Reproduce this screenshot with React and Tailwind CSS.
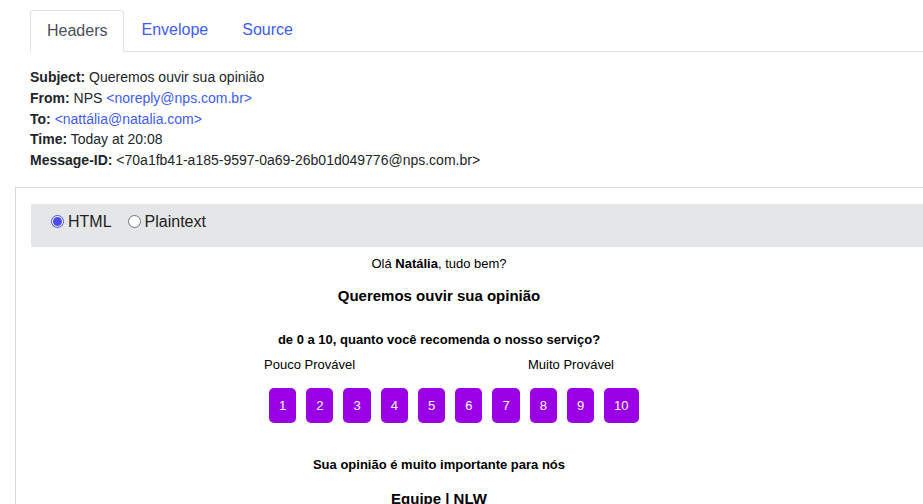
import React from "react";

const F = { fontFamily: '"Liberation Sans", Arial, sans-serif' };

function Radio({ checked }) {
  return checked ? (
    <span className="inline-flex items-center justify-center w-[13px] h-[13px] rounded-full border border-[#4b4cf6] bg-white">
      <span className="w-[9px] h-[9px] rounded-full bg-[#4b4cf6]" />
    </span>
  ) : (
    <span className="inline-block w-[13px] h-[13px] rounded-full border border-[#767676] bg-white" />
  );
}

export default function App() {
  const nums = [1, 2, 3, 4, 5, 6, 7, 8, 9, 10];
  return (
    <div className="w-[923px] h-[504px] overflow-hidden bg-white text-[#212529]" style={F}>
      {/* Tabs */}
      <div className="pt-[10px] pl-[30px]">
        <div className="flex border-b border-[#dee2e6] text-[16px] leading-[24px]">
          <div className="px-[16px] py-[8px] border border-[#dee2e6] border-b-white -mb-px rounded-t-[4px] text-[#495057] bg-white">
            Headers
          </div>
          <div className="px-[17px] py-[8px] text-[#3d5cf5]">Envelope</div>
          <div className="px-[17px] py-[8px] text-[#3d5cf5]">Source</div>
        </div>
      </div>

      {/* Headers */}
      <div className="pl-[30px] mt-[15px] text-[14px] leading-[20.75px] text-[#212529]">
        <div><b>Subject:</b> Queremos ouvir sua opinião</div>
        <div><b>From:</b> NPS <span className="text-[#3d5cf5]">&lt;noreply@nps.com.br&gt;</span></div>
        <div><b>To:</b> <span className="text-[#3d5cf5]">&lt;nattália@natalia.com&gt;</span></div>
        <div><b>Time:</b> Today at 20:08</div>
        <div><b>Message-ID:</b> &lt;70a1fb41-a185-9597-0a69-26b01d049776@nps.com.br&gt;</div>
      </div>

      {/* Frame */}
      <div className="ml-[15px] mt-[16px] border-l border-t border-[#d9d6e0] pl-[15px] pt-[16px] h-[400px]">
        <div className="h-[43px] bg-[#e5e6e8] pl-[20px] pt-[6px] flex items-start text-[16px] leading-[24px] text-[#222]">
          <div className="flex items-center h-[24px]">
            <Radio checked />
            <span className="ml-[4px]">HTML</span>
          </div>
          <div className="flex items-center h-[24px] ml-[16px]">
            <Radio />
            <span className="ml-[4px]">Plaintext</span>
          </div>
        </div>

        {/* Email body */}
        <div className="w-[816px] text-center text-black">
          <div className="mt-[9px] text-[13px] leading-[15px]">
            Olá <b>Natália</b>, tudo bem?
          </div>
          <div className="mt-[16px] text-[15px] leading-[17px] font-bold">
            Queremos ouvir sua opinião
          </div>
          <div className="mt-[28px] text-[13px] leading-[15px] font-bold">
            de 0 a 10, quanto você recomenda o nosso serviço?
          </div>
          <div className="mx-auto w-[350px] mt-[10px] flex justify-between text-[13px] leading-[15px]">
            <span>Pouco Provável</span>
            <span>Muito Provável</span>
          </div>
          <div className="mx-auto w-[350px] mt-[16px]">
            <div className="flex gap-[10px] pl-[5px] whitespace-nowrap">
              {nums.map((n) => (
                <div
                  key={n}
                  className="h-[35px] px-[10px] rounded-[5px] bg-[#9900e6] text-white text-[13px] flex items-center justify-center shrink-0"
                >
                  {n}
                </div>
              ))}
            </div>
          </div>
          <div className="mt-[34px] text-[13px] leading-[15px] font-bold">
            Sua opinião é muito importante para nós
          </div>
          <div className="mt-[18px] text-[15px] leading-[17px] font-bold">
            Equipe | NLW
          </div>
        </div>
      </div>
    </div>
  );
}
